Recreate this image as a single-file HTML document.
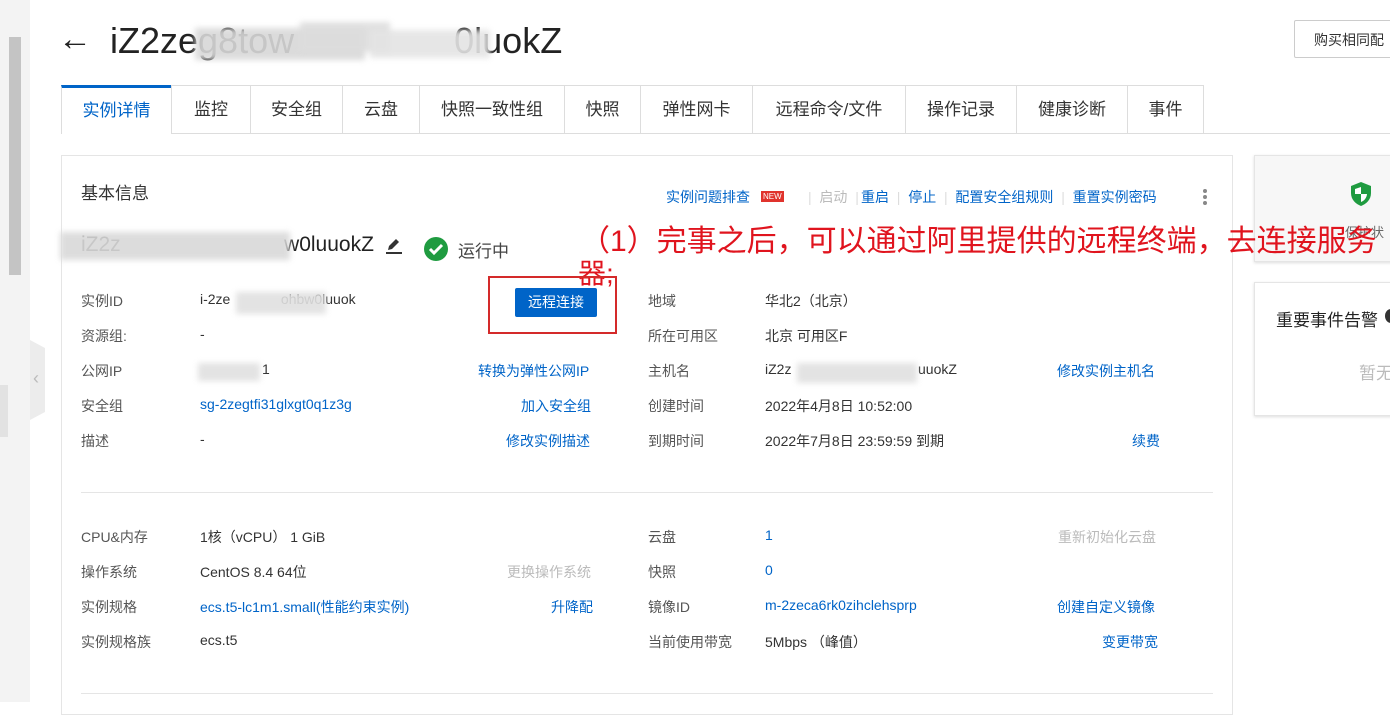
<!DOCTYPE html>
<html><head><meta charset="utf-8"><style>
body{margin:0;width:1390px;height:702px;overflow:hidden;background:#fff;font-family:"Liberation Sans","Noto Sans CJK SC",sans-serif;color:#333;position:relative}
.a{position:absolute;white-space:nowrap}
.l{font-size:14px;color:#555}
.v{font-size:14px;color:#333}
.b{font-size:14px;color:#0064c8}
.g{font-size:14px;color:#bbb}
.tab{position:absolute;top:85px;height:48px;border:1px solid #ddd;border-bottom:none;font-size:17px;line-height:48px;text-align:center;color:#333;box-sizing:border-box;background:#fff}
.blur{position:absolute;background:#ddd;filter:blur(3px);opacity:.9}
</style></head><body>
<div class="a" style="left:0;top:0;width:30px;height:702px;background:#f3f3f3"></div>
<div class="a" style="left:9px;top:37px;width:12px;height:238px;background:#c4c4c4"></div>
<div class="a" style="left:0;top:385px;width:8px;height:52px;background:#e2e2e2"></div>
<div class="a" style="left:30px;top:340px;width:15px;height:80px;background:#ececec;clip-path:polygon(0 0,100% 10%,100% 90%,0 100%)"></div>
<div class="a" style="left:33px;top:368px;color:#bbb;font-size:18px">‹</div>

<div class="a" style="left:58px;top:20px;font-size:34px;color:#222">←</div>
<div class="a" style="left:110px;top:20px;font-size:36px;color:#222;font-weight:400">iZ2zeg8tow&nbsp;&nbsp;&nbsp;&nbsp;&nbsp;&nbsp;&nbsp;&nbsp;&nbsp;&nbsp;&nbsp;&nbsp;&nbsp;&nbsp;&nbsp;&nbsp;0luokZ</div>
<div class="blur" style="left:195px;top:28px;width:170px;height:32px;background:#d8d8d8"></div>
<div class="blur" style="left:300px;top:22px;width:90px;height:30px"></div>
<div class="blur" style="left:370px;top:30px;width:120px;height:28px;background:#e4e4e4"></div>

<div class="a" style="left:1294px;top:20px;width:110px;height:38px;border:1px solid #ccc;border-radius:2px;box-sizing:border-box;font-size:14px;line-height:38px;padding-left:19px;color:#333">购买相同配</div>

<div class="a" style="left:61px;top:133px;width:1329px;height:1px;background:#ddd"></div>
<div class="tab" style="left:61px;width:111px;color:#0064c8;border-top:3px solid #0064c8;line-height:46px;height:49px">实例详情</div>
<div class="tab" style="left:171px;width:80px">监控</div>
<div class="tab" style="left:250px;width:93px">安全组</div>
<div class="tab" style="left:342px;width:78px">云盘</div>
<div class="tab" style="left:419px;width:146px">快照一致性组</div>
<div class="tab" style="left:564px;width:77px">快照</div>
<div class="tab" style="left:640px;width:113px">弹性网卡</div>
<div class="tab" style="left:752px;width:154px">远程命令/文件</div>
<div class="tab" style="left:905px;width:112px">操作记录</div>
<div class="tab" style="left:1016px;width:112px">健康诊断</div>
<div class="tab" style="left:1127px;width:77px">事件</div>

<div class="a" style="left:61px;top:155px;width:1172px;height:560px;border:1px solid #e5e5e5;box-sizing:border-box"></div>
<div class="a" style="left:1254px;top:155px;width:140px;height:107px;border:1px solid #e5e5e5;background:#f7f7f7;box-sizing:border-box;box-shadow:0 1px 3px #ddd"></div>
<svg class="a" style="left:1349px;top:181px" width="24" height="26" viewBox="0 0 24 26"><path d="M12 1L2 5v7c0 7 5 11 10 13 5-2 10-6 10-13V5z" fill="#1f9b40"/><path d="M12 6v7H6V8l6-2zM12 13h6c-.3 4-3 7-6 8z" fill="#fff"/></svg>
<div class="a" style="left:1345px;top:222px;font-size:13px;color:#666">保护状</div>
<div class="a" style="left:1254px;top:282px;width:140px;height:134px;border:1px solid #e5e5e5;background:#fff;box-sizing:border-box;box-shadow:0 1px 3px #ddd"></div>
<div class="a" style="left:1276px;top:306px;font-size:17px;color:#222">重要事件告警</div>
<div class="a" style="left:1385px;top:309px;width:12px;height:14px;border-radius:50%;background:#333"></div>
<div class="a" style="left:1359px;top:359px;font-size:17px;color:#bbb">暂无</div>

<div class="a" style="left:81px;top:179px;font-size:17px;color:#333">基本信息</div>
<div class="a b" style="left:666px;top:187px">实例问题排查</div>
<div class="a" style="left:761px;top:191px;background:#e0332d;color:#fff;font-size:8px;padding:1px 2px;line-height:9px">NEW</div>
<div class="a g" style="left:808px;top:187px"><span style="color:#ddd">|</span>&nbsp; 启动 &nbsp;<span style="color:#ddd">|</span></div>
<div class="a b" style="left:861px;top:187px">重启 &nbsp;<span style="color:#ddd">|</span>&nbsp; 停止 &nbsp;<span style="color:#ddd">|</span>&nbsp; 配置安全组规则 &nbsp;<span style="color:#ddd">|</span>&nbsp; 重置实例密码</div>
<div class="a" style="left:1203px;top:189px;width:4px;height:4px;border-radius:50%;background:#888;box-shadow:0 6px 0 #888,0 12px 0 #888"></div>

<div class="a" style="left:81px;top:233px;font-size:21px;color:#222">iZ2z&nbsp;&nbsp;&nbsp;&nbsp;&nbsp;&nbsp;&nbsp;&nbsp;&nbsp;&nbsp;&nbsp;&nbsp;&nbsp;&nbsp;&nbsp;&nbsp;&nbsp;&nbsp;&nbsp;&nbsp;&nbsp;&nbsp;&nbsp;&nbsp;&nbsp;&nbsp;&nbsp;&nbsp;w0luuokZ</div>
<div class="blur" style="left:60px;top:232px;width:230px;height:28px;background:#d9d9d9"></div>
<svg class="a" style="left:385px;top:237px" width="18" height="18" viewBox="0 0 18 18"><path d="M3 13l1-4 7-7 3 3-7 7z" fill="#333"/><rect x="1" y="15" width="16" height="2" fill="#333"/></svg>
<svg class="a" style="left:424px;top:237px" width="24" height="24" viewBox="0 0 24 24"><circle cx="12" cy="12" r="12" fill="#1f9b40"/><path d="M6 12l4 4 8-8" stroke="#fff" stroke-width="3" fill="none"/></svg>
<div class="a" style="left:458px;top:237px;font-size:17px;color:#444">运行中</div>

<div class="a" style="left:580px;top:216px;font-size:30px;color:#e0141e">（1）完事之后，可以通过阿里提供的远程终端，去连接服务</div>
<div class="a" style="left:578px;top:252px;font-size:28px;color:#e0141e">器;</div>

<div class="a" style="left:488px;top:276px;width:129px;height:58px;border:2px solid #d42a2a;box-sizing:border-box"></div>
<div class="a" style="left:515px;top:288px;width:82px;height:29px;background:#0064c8;border-radius:2px;color:#fff;font-size:14px;line-height:29px;text-align:center">远程连接</div>

<div class="a l" style="left:81px;top:291px">实例ID</div><div class="a v" style="left:200px;top:291px">i-2ze&nbsp;&nbsp;&nbsp;&nbsp;&nbsp;&nbsp;&nbsp;&nbsp;&nbsp;&nbsp;&nbsp;&nbsp;&nbsp;ohbw0luuok</div>
<div class="blur" style="left:236px;top:292px;width:90px;height:22px;background:#e0e0e0"></div>
<div class="a l" style="left:81px;top:326px">资源组:</div><div class="a v" style="left:200px;top:326px">-</div>
<div class="a l" style="left:81px;top:361px">公网IP</div><div class="a v" style="left:262px;top:361px">1</div>
<div class="blur" style="left:198px;top:363px;width:62px;height:18px;background:#e0e0e0"></div>
<div class="a b" style="left:478px;top:361px">转换为弹性公网IP</div>
<div class="a l" style="left:81px;top:396px">安全组</div><div class="a b" style="left:200px;top:396px">sg-2zegtfi31glxgt0q1z3g</div><div class="a b" style="left:521px;top:396px">加入安全组</div>
<div class="a l" style="left:81px;top:431px">描述</div><div class="a v" style="left:200px;top:431px">-</div><div class="a b" style="left:506px;top:431px">修改实例描述</div>

<div class="a l" style="left:648px;top:291px">地域</div><div class="a v" style="left:765px;top:291px">华北2（北京）</div>
<div class="a l" style="left:648px;top:326px">所在可用区</div><div class="a v" style="left:765px;top:326px">北京 可用区F</div>
<div class="a l" style="left:648px;top:361px">主机名</div><div class="a v" style="left:765px;top:361px">iZ2z</div><div class="a v" style="left:918px;top:361px">uuokZ</div>
<div class="blur" style="left:797px;top:363px;width:120px;height:20px;background:#e0e0e0"></div>
<div class="a b" style="left:1057px;top:361px">修改实例主机名</div>
<div class="a l" style="left:648px;top:396px">创建时间</div><div class="a v" style="left:765px;top:396px">2022年4月8日 10:52:00</div>
<div class="a l" style="left:648px;top:431px">到期时间</div><div class="a v" style="left:765px;top:431px">2022年7月8日 23:59:59 到期</div><div class="a b" style="left:1132px;top:431px">续费</div>

<div class="a" style="left:81px;top:492px;width:1132px;height:1px;background:#e5e5e5"></div>

<div class="a l" style="left:81px;top:527px">CPU&amp;内存</div><div class="a v" style="left:200px;top:527px">1核（vCPU） 1 GiB</div>
<div class="a l" style="left:81px;top:562px">操作系统</div><div class="a v" style="left:200px;top:562px">CentOS 8.4 64位</div><div class="a g" style="left:507px;top:562px">更换操作系统</div>
<div class="a l" style="left:81px;top:597px">实例规格</div><div class="a b" style="left:200px;top:597px">ecs.t5-lc1m1.small(性能约束实例)</div><div class="a b" style="left:551px;top:597px">升降配</div>
<div class="a l" style="left:81px;top:632px">实例规格族</div><div class="a v" style="left:200px;top:632px">ecs.t5</div>

<div class="a l" style="left:648px;top:527px">云盘</div><div class="a b" style="left:765px;top:527px">1</div><div class="a g" style="left:1058px;top:527px">重新初始化云盘</div>
<div class="a l" style="left:648px;top:562px">快照</div><div class="a b" style="left:765px;top:562px">0</div>
<div class="a l" style="left:648px;top:597px">镜像ID</div><div class="a b" style="left:765px;top:597px">m-2zeca6rk0zihclehsprp</div><div class="a b" style="left:1057px;top:597px">创建自定义镜像</div>
<div class="a l" style="left:648px;top:632px">当前使用带宽</div><div class="a v" style="left:765px;top:632px">5Mbps （峰值）</div><div class="a b" style="left:1102px;top:632px">变更带宽</div>

<div class="a" style="left:81px;top:693px;width:1132px;height:1px;background:#e5e5e5"></div>
</body></html>
